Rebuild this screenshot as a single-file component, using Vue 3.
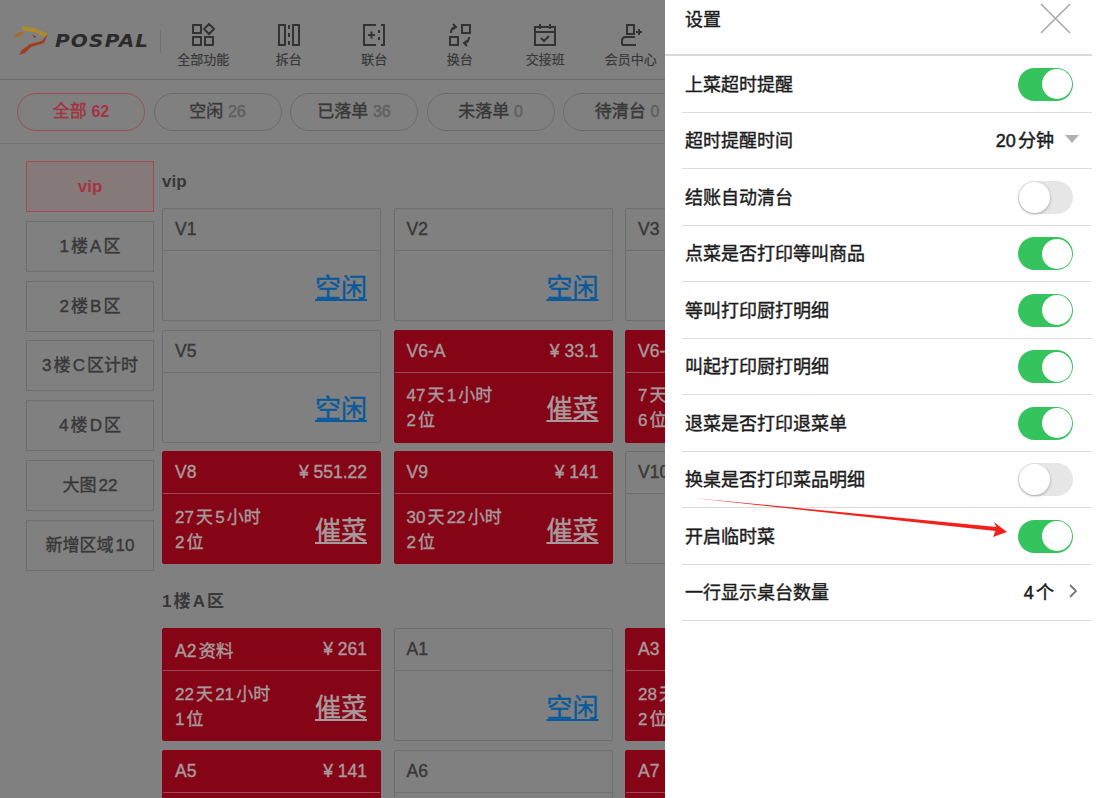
<script setup>
const navItems = [
  { label: "全部功能", d: "M2 2h8v8H2z M2 14h8v8H2z M14 14h8v8h-8z M18 1l5 5-5 5-5-5z" },
  { label: "拆台", d: "M2 2h6v20H2z M16 2h6v20h-6z M12 2v4 M12 10v4 M12 18v4" },
  { label: "联台", d: "M14 2H2v20h12 M19 2h3v20h-3 M6 12h7 M9.5 8.5v7 M17 7v3 M17 14v3" },
  { label: "换台", d: "M14 2h8v8h-8z M2 14h8v8H2z M3 10c0-3 1-5 4-6 M5 1L8 4 4.500 6.500 M21 14c0 3-1 5-4 6 M19 23l-3-3 3.500-2.500" },
  { label: "交接班", d: "M2 4h20v18H2z M2 9h20 M7 1v5 M17 1v5 M8 15l3 3 5-5" },
  { label: "会员中心", d: "M8 2h7v9H8z M3 22v-4q0-4 4-4h9 M3 22h14 M20 6v6 M17 9h6" },
];

const tabs = [
  { label: "全部", count: 62, active: true },
  { label: "空闲", count: 26 },
  { label: "已落单", count: 36 },
  { label: "未落单", count: 0 },
  { label: "待清台", count: 0 },
];

const areas = ["vip", "1楼A区", "2楼B区", "3楼C区计时", "4楼D区", "大图22", "新增区域10"];

const sections = [
  {
    title: "vip",
    tables: [
      { name: "V1" },
      { name: "V2" },
      { name: "V3" },
      { name: "V5" },
      { name: "V6-A", price: "¥ 33.1", time: "47天1小时", seats: "2位" },
      { name: "V6-B", price: "¥ 80", time: "7天3小时", seats: "6位" },
      { name: "V8", price: "¥ 551.22", time: "27天5小时", seats: "2位" },
      { name: "V9", price: "¥ 141", time: "30天22小时", seats: "2位" },
      { name: "V10" },
    ],
  },
  {
    title: "1楼A区",
    tables: [
      { name: "A2资料", price: "¥ 261", time: "22天21小时", seats: "1位" },
      { name: "A1" },
      { name: "A3", price: "¥ 95", time: "28天2小时", seats: "2位" },
      { name: "A5", price: "¥ 141", time: "30天2小时", seats: "2位" },
      { name: "A6" },
      { name: "A7", price: "¥ 60", time: "9天1小时", seats: "2位" },
    ],
  },
];

const settings = [
  { label: "上菜超时提醒", on: true },
  { label: "超时提醒时间", value: "20分钟", mark: "drop" },
  { label: "结账自动清台", on: false },
  { label: "点菜是否打印等叫商品", on: true },
  { label: "等叫打印厨打明细", on: true },
  { label: "叫起打印厨打明细", on: true },
  { label: "退菜是否打印退菜单", on: true },
  { label: "换桌是否打印菜品明细", on: false },
  { label: "开启临时菜", on: true },
  { label: "一行显示桌台数量", value: "4个", mark: "next" },
];
</script>

<template>
  <div class="screen">
    <div class="page">
      <header class="topbar">
        <div class="logo">
          <svg class="fox" viewBox="0 0 36 30" width="36" height="30">
            <path fill="#ad8a2a" d="M8 0l13 2 14 6-2 4-11-6-11-1z" />
            <path fill="#ab6a20" d="M0 10l8.500-4.500L11 7l-6 4z" />
            <path fill="#a03c20" d="M35 8l-4 9-13 4-6 6-6 2 3-5 8-6 12-3 3-4z" />
            <path fill="#8f2a3a" d="M19 9l4 1-1 2z" />
          </svg>
          <span class="brand">POSPAL</span>
        </div>
        <nav class="nav">
          <div v-for="item in navItems" :key="item.label" class="nav-item">
            <svg viewBox="0 0 24 24" width="24" height="24" class="nav-icon">
              <path :d="item.d" />
            </svg>
            <span>{{ item.label }}</span>
          </div>
        </nav>
      </header>

      <div class="tabs">
        <div v-for="tab in tabs" :key="tab.label" class="tab" :class="{ active: tab.active }">
          {{ tab.label }} <em>{{ tab.count }}</em>
        </div>
      </div>

      <div class="content">
        <aside class="areas">
          <div v-for="(area, i) in areas" :key="area" class="area" :class="{ active: i === 0 }">{{ area }}</div>
        </aside>
        <main class="tables">
          <section v-for="section in sections" :key="section.title" class="section">
            <h3>{{ section.title }}</h3>
            <div class="grid">
              <div v-for="table in section.tables" :key="table.name" class="card" :class="{ busy: table.price }">
                <div class="card-head">
                  <span>{{ table.name }}</span>
                  <span v-if="table.price">{{ table.price }}</span>
                </div>
                <div class="card-body">
                  <div v-if="table.price" class="info">
                    <div>{{ table.time }}</div>
                    <div>{{ table.seats }}</div>
                  </div>
                  <a class="state">{{ table.price ? "催菜" : "空闲" }}</a>
                </div>
              </div>
            </div>
          </section>
        </main>
      </div>
    </div>

    <div class="panel">
      <div class="panel-head">
        <span>设置</span>
        <svg class="close" viewBox="0 0 32 32" width="31" height="31">
          <path d="M1 1l30 30M31 1L1 31" />
        </svg>
      </div>
      <div v-for="row in settings" :key="row.label" class="row">
        <span>{{ row.label }}</span>
        <div v-if="row.value" class="row-value">
          <b>{{ row.value }}</b>
          <i v-if="row.mark === 'drop'" class="drop"></i>
          <svg v-else class="chevron" viewBox="0 0 10 16" width="10" height="16">
            <path d="M2 2l6 6-6 6" />
          </svg>
        </div>
        <div v-else class="switch" :class="{ on: row.on }"><i></i></div>
      </div>
      <svg class="arrow" viewBox="0 0 330 50" width="330" height="50">
        <path d="M0 0L303.500 29 301 24 314 34 300 39 302.500 33Z" />
      </svg>
    </div>
  </div>
</template>

<style scoped>
.screen {
  position: relative;
  display: flex;
  width: 1103px;
  height: 798px;
  overflow: hidden;
  font-family: "Liberation Sans", "Noto Sans CJK SC", sans-serif;
  text-autospace: normal;
  background: #fff;
}
.page {
  width: 665px;
  flex: none;
  overflow: hidden;
  background: #808080;
  color: #383838;
  -webkit-text-stroke: 0.4px currentColor;
}
.topbar {
  display: flex;
  height: 79px;
  border-bottom: 1px solid #6f6f6f;
}
.logo {
  display: flex;
  align-items: center;
  gap: 6px;
  width: 160px;
  flex: none;
  box-sizing: border-box;
  padding: 0 0 0 13px;
  height: 82px;
}
.brand {
  font-family: "DejaVu Sans", sans-serif;
  font-size: 20px;
  font-weight: 700;
  font-style: italic;
  letter-spacing: 1.200px;
  color: #2b2b2b;
  -webkit-text-stroke: 0;
  transform: scaleY(0.9);
}
.nav {
  display: flex;
  position: relative;
}
.nav::before {
  content: "";
  position: absolute;
  left: 0;
  top: 30px;
  height: 23px;
  width: 1px;
  background: #707070;
}
.nav-item {
  width: 85.500px;
  display: flex;
  flex-direction: column;
  align-items: center;
  padding: 23px 0 0 1px;
  box-sizing: border-box;
  font-size: 13px;
  line-height: 18px;
  gap: 4px;
  -webkit-text-stroke: 0.2px currentColor;
}
.nav-icon {
  fill: none;
  stroke: #333;
  stroke-width: 2;
}
.tabs {
  display: flex;
  gap: 8.500px;
  height: 64px;
  box-sizing: border-box;
  padding: 13px 0 0 17px;
  border-bottom: 1px solid #727272;
}
.tab {
  width: 128px;
  height: 38px;
  flex: none;
  box-sizing: border-box;
  border: 1px solid #6c6c6c;
  border-radius: 19px;
  font-size: 17px;
  line-height: 36px;
  text-align: center;
  white-space: nowrap;
}
.tab em {
  font-style: normal;
  font-size: 16px;
  color: #5f5f5f;
}
.tab.active {
  border-color: #a54a52;
  color: #a63340;
}
.tab.active em {
  color: #a63340;
  font-weight: 700;
  -webkit-text-stroke: 0;
}
.content {
  display: flex;
  padding: 17px 0 0 26px;
}
.areas {
  width: 128px;
  flex: none;
  display: flex;
  flex-direction: column;
  gap: 8.800px;
  margin-right: 8px;
}
.area {
  height: 51px;
  box-sizing: border-box;
  border: 1px solid #6e6e6e;
  font-size: 17px;
  line-height: 49px;
  text-align: center;
  white-space: nowrap;
}
.area.active {
  border-color: #a54a52;
  background: #85797a;
  color: #a63340;
  font-weight: 700;
  -webkit-text-stroke: 0;
}
.section h3 {
  margin: 0;
  height: 47px;
  font-size: 17px;
  line-height: 41px;
  font-weight: 700;
  -webkit-text-stroke: 0;
}
.section + .section {
  margin-top: 17px;
}
.grid {
  display: grid;
  grid-template-columns: repeat(3, 219px);
  column-gap: 12.500px;
  row-gap: 8.500px;
  width: 700px;
}
.card {
  height: 113px;
  box-sizing: border-box;
  border: 1px solid #6e6e6e;
  border-radius: 2px;
  display: flex;
  flex-direction: column;
}
.card.busy {
  background: #850517;
  border-color: #850517;
  color: #a89a9c;
}
.card-head {
  height: 42px;
  flex: none;
  box-sizing: border-box;
  padding: 0 13px 0 12px;
  border-bottom: 1px solid #707070;
  display: flex;
  justify-content: space-between;
  align-items: center;
  font-size: 17.500px;
}
.busy .card-head {
  border-color: #9b4a55;
}
.card-body {
  flex: 1;
  display: flex;
  justify-content: space-between;
  align-items: center;
  padding: 0 13px 0 12px;
}
.info {
  margin-top: 2px;
  font-size: 17px;
  line-height: 25px;
}
.state {
  margin-left: auto;
  margin-top: 4px;
  font-size: 26px;
  line-height: 34px;
  text-decoration: underline;
  color: #095a9c;
}
.busy .state {
  color: #a89a9c;
}
.panel {
  flex: 1;
  padding-right: 11px;
  color: #1c1c1c;
  font-size: 18px;
  -webkit-text-stroke: 0.4px currentColor;
}
.panel-head {
  height: 56px;
  box-sizing: border-box;
  padding: 4px 21px 0 20px;
  border-bottom: 2px solid #d9d9d9;
  display: flex;
  justify-content: space-between;
  align-items: flex-start;
  line-height: 32px;
}
.close {
  margin-top: -1px;
  fill: none;
  stroke: #a6a6a6;
  stroke-width: 1.500;
}
.row {
  height: 56.500px;
  box-sizing: border-box;
  margin-left: 17px;
  padding: 0 19px 2px 3px;
  border-bottom: 1px solid #dcdcdc;
  display: flex;
  justify-content: space-between;
  align-items: center;
}
.row-value {
  display: flex;
  align-items: center;
  font-size: 18px;
}
.row-value b {
  font-weight: 400;
  -webkit-text-stroke: 0.5px currentColor;
}
.drop {
  width: 0;
  height: 0;
  margin: 0 -6px 0 11px;
  border: 7px solid transparent;
  border-top: 8px solid #b0b0b0;
  border-bottom: 0;
}
.chevron {
  margin: 0 -5px 0 14px;
  fill: none;
  stroke: #777;
  stroke-width: 1.800;
}
.switch {
  width: 55px;
  height: 33px;
  margin-top: 3px;
  box-sizing: border-box;
  border-radius: 17px;
  background: #e6e6e6;
  display: flex;
  align-items: center;
  padding-left: 1px;
}
.switch i {
  width: 31px;
  height: 31px;
  border-radius: 50%;
  background: #fff;
  box-shadow: 0 1px 3px rgba(0, 0, 0, 0.3);
}
.switch.on {
  background: #34c35c;
  justify-content: flex-end;
  padding: 0 1.500px 0 0;
}
.switch.on i {
  width: 30px;
  height: 30px;
  box-shadow: none;
}
.arrow {
  position: absolute;
  left: 693px;
  top: 498px;
  fill: #f4201c;
}
</style>
